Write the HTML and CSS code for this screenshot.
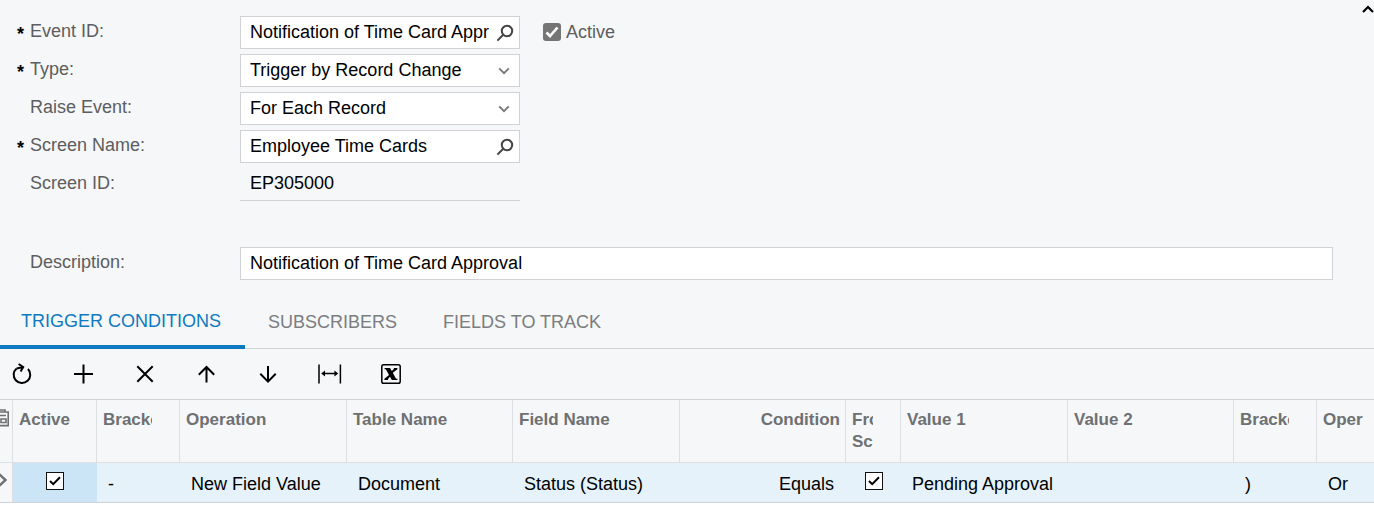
FILE: index.html
```html
<!DOCTYPE html>
<html lang="en">
<head>
<meta charset="utf-8">
<title>Business Events</title>
<link rel="stylesheet" href="styles.css">
</head>
<body>
<main class="panel">
  <form class="summary">
    <button type="button" class="collapse" aria-label="Collapse">
      <svg width="12" height="8" viewBox="0 0 12 8"><path d="M1 7 L6 2 L11 7" fill="none" stroke="#000" stroke-width="2.2"/></svg>
    </button>
    <div class="row">
      <label class="label required" for="event-id">Event ID:</label>
      <div class="field">
        <input class="text" id="event-id" type="text" value="Notification of Time Card Approval">
        <button type="button" class="lookup" aria-label="Find event">
          <svg width="18" height="18" viewBox="0 0 18 18"><circle cx="11" cy="7" r="5.2"/><path d="M7.2 10.8 L1.4 16.6"/></svg>
        </button>
      </div>
      <label class="active"><input class="check-solid" type="checkbox" checked>Active</label>
    </div>
    <div class="row">
      <label class="label required" for="type">Type:</label>
      <div class="field">
        <select class="text" id="type"><option>Trigger by Record Change</option></select>
        <svg class="chevron" width="12" height="8" viewBox="0 0 12 8"><path d="M1.2 1.4 L6 6.2 L10.8 1.4"/></svg>
      </div>
    </div>
    <div class="row">
      <label class="label" for="raise">Raise Event:</label>
      <div class="field">
        <select class="text" id="raise"><option>For Each Record</option></select>
        <svg class="chevron" width="12" height="8" viewBox="0 0 12 8"><path d="M1.2 1.4 L6 6.2 L10.8 1.4"/></svg>
      </div>
    </div>
    <div class="row">
      <label class="label required" for="screen-name">Screen Name:</label>
      <div class="field">
        <input class="text" id="screen-name" type="text" value="Employee Time Cards">
        <button type="button" class="lookup" aria-label="Find screen">
          <svg width="18" height="18" viewBox="0 0 18 18"><circle cx="11" cy="7" r="5.2"/><path d="M7.2 10.8 L1.4 16.6"/></svg>
        </button>
      </div>
    </div>
    <div class="row">
      <label class="label" for="screen-id">Screen ID:</label>
      <div class="field readonly">
        <input class="text" id="screen-id" type="text" value="EP305000" readonly>
      </div>
    </div>
    <div class="row wide">
      <label class="label" for="description">Description:</label>
      <div class="field">
        <input class="text" id="description" type="text" value="Notification of Time Card Approval">
      </div>
    </div>
  </form>

  <nav class="tabs">
    <a class="tab current" href="#conditions">TRIGGER CONDITIONS</a>
    <a class="tab" href="#subscribers">SUBSCRIBERS</a>
    <a class="tab" href="#fields">FIELDS TO TRACK</a>
  </nav>

  <div class="toolbar">
    <button type="button" class="tool" aria-label="Refresh">
      <svg width="24" height="24" viewBox="0 0 24 24"><path d="M6.6 6.4 A8.3 8.3 0 1 0 18 7"/><path d="M8.6 2 L13.2 5 L10.6 9.4 M13.2 5 L6.6 6.4"/></svg>
    </button>
    <button type="button" class="tool" aria-label="Add row">
      <svg width="24" height="24" viewBox="0 0 24 24"><path d="M2 12 H21 M11.5 2.5 V21.5"/></svg>
    </button>
    <button type="button" class="tool" aria-label="Delete row">
      <svg width="24" height="24" viewBox="0 0 24 24"><path d="M4.3 4.3 L19.7 19.7 M19.7 4.3 L4.3 19.7"/></svg>
    </button>
    <button type="button" class="tool" aria-label="Move up">
      <svg width="24" height="24" viewBox="0 0 24 24"><path d="M11.5 20.5 V5 M3.8 12.8 L11.5 5 L19.2 12.8"/></svg>
    </button>
    <button type="button" class="tool" aria-label="Move down">
      <svg width="24" height="24" viewBox="0 0 24 24"><path d="M12 4 V19.5 M4.3 11.8 L12 19.6 L19.7 11.8"/></svg>
    </button>
    <button type="button" class="tool" aria-label="Fit columns">
      <svg width="24" height="24" viewBox="0 0 24 24"><path class="thin" d="M1 2.5 V21.5 M22.4 2.5 V21.5 M5 11.5 H18.5"/><path class="solid" d="M3.2 11.5 L7 8.4 V14.6 Z M20.2 11.5 L16.4 8.4 V14.6 Z"/></svg>
    </button>
    <button type="button" class="tool" aria-label="Export to Excel">
      <svg width="24" height="24" viewBox="0 0 24 24"><rect class="thin" x="2.8" y="2.8" width="18.4" height="18.4" rx="1.8"/><path class="solid" d="M5.6 6 H11 L12.8 9 L14.8 7 V6 H18.4 V7.2 L13.8 10.8 L17 16.8 H18.4 V18 H12.8 L11 14.8 L9 17 V18 H5.4 V16.8 L10 13 L6.8 7.2 H5.6 Z"/></svg>
    </button>
  </div>

  <table class="grid">
    <colgroup>
      <col class="c-mark"><col class="c-active"><col class="c-small"><col class="c-a"><col class="c-b"><col class="c-a"><col class="c-b"><col class="c-from"><col class="c-a"><col class="c-b"><col class="c-small"><col>
    </colgroup>
    <thead>
      <tr>
        <th class="mark"><svg width="20" height="20" viewBox="0 0 20 20"><path d="M4 4 H18.2 V17.6 H4 M5 2 H15 V4 M4 7.5 H16 M4 11 H9 M4 14.5 H9 M11 11 H16 V14.5 H11 Z"/></svg></th>
        <th>Active</th>
        <th class="clipped"><div>Brackets</div></th>
        <th>Operation</th>
        <th>Table Name</th>
        <th>Field Name</th>
        <th class="right">Condition</th>
        <th class="clipped"><div>From Screen</div></th>
        <th>Value 1</th>
        <th>Value 2</th>
        <th class="clipped"><div>Brackets</div></th>
        <th>Oper</th>
      </tr>
    </thead>
    <tbody>
      <tr>
        <td class="mark"><svg width="12" height="16" viewBox="0 0 12 16"><path d="M2 2 L8.5 8 L2 14"/></svg></td>
        <td class="selected center"><input class="check" type="checkbox" checked aria-label="Active"></td>
        <td>-</td>
        <td>New Field Value</td>
        <td>Document</td>
        <td>Status (Status)</td>
        <td class="right">Equals</td>
        <td class="center"><input class="check" type="checkbox" checked aria-label="From Screen"></td>
        <td>Pending Approval</td>
        <td></td>
        <td>)</td>
        <td>Or</td>
      </tr>
    </tbody>
  </table>
</main>
</body>
</html>
```

FILE: styles.css
```css
* {
  box-sizing: border-box;
}

body {
  margin: 0;
  background: #fff;
  color: #000;
  font: 18px/22px "Liberation Sans", Arial, sans-serif;
  overflow-x: hidden;
}

button {
  display: flex;
  align-items: center;
  justify-content: center;
  padding: 0;
  border: 0;
  background: none;
}

.panel {
  background: #f5f7f9;
}

/* Summary form */
.summary {
  position: relative;
  display: flex;
  flex-direction: column;
  gap: 4px;
  padding: 16px 41px 14px 0;
}

.collapse {
  position: absolute;
  top: 5px;
  right: 0;
  width: 12px;
  overflow: hidden;
}

.row {
  display: grid;
  grid-template-columns: 240px 280px auto;
  justify-content: start;
}

.row.wide {
  grid-template-columns: 240px 1fr;
  justify-content: stretch;
  margin-top: 41px;
}

.label {
  position: relative;
  padding: 4px 0 0 30px;
  color: #5d5d5d;
}

.required::before {
  content: "*";
  position: absolute;
  left: 17px;
  top: 7px;
  color: #000;
  font-size: 18px;
  font-weight: bold;
}

.field {
  position: relative;
  display: flex;
  height: 33px;
  margin-bottom: 1px;
  border: 1px solid #d0d2d5;
  background: #fff;
}

.text {
  flex: 1;
  min-width: 0;
  margin: 0;
  padding: 0 0 1px 9px;
  border: 0;
  outline: 0;
  border-radius: 0;
  appearance: none;
  background: transparent;
  color: #000;
  font: inherit;
}

.readonly {
  border-width: 0 0 1px;
  background: none;
}

.readonly .text {
  padding: 0 0 2px 10px;
}

.lookup {
  width: 30px;
  padding-left: 2px;
}

.lookup svg {
  fill: none;
  stroke: #444;
  stroke-width: 2;
}

.chevron {
  position: absolute;
  right: 9px;
  top: 12px;
  pointer-events: none;
  fill: none;
  stroke: #777;
  stroke-width: 1.8;
}

.active {
  display: flex;
  align-items: center;
  gap: 5px;
  padding: 0 0 2px 23px;
  color: #5d5d5d;
}

.check-solid,
.check {
  flex: none;
  width: 18px;
  height: 18px;
  margin: 0;
  appearance: none;
}

.check-solid {
  border-radius: 3px;
  background: #757575 url("data:image/svg+xml,%3Csvg xmlns='http://www.w3.org/2000/svg' viewBox='0 0 18 18'%3E%3Cpath d='M3.5 9.5 L7 13 L14.5 4.5' fill='none' stroke='white' stroke-width='2.6'/%3E%3C/svg%3E");
}

/* Tabs */
.tabs {
  display: flex;
  height: 54px;
  border-bottom: 1px solid #d0d2d5;
}

.tab {
  height: 54px;
  padding: 16px 23px 0;
  color: #7b7d7f;
  text-decoration: none;
}

.tab.current {
  padding: 15px 24px 0 21px;
  border-bottom: 4px solid #0f7ac0;
  color: #0f7ac0;
}

/* Toolbar */
.toolbar {
  display: flex;
  justify-content: space-between;
  max-width: 403px;
  padding: 13px 0 13px 10px;
}

.tool svg {
  fill: none;
  stroke: #000;
  stroke-width: 2;
}

.tool .thin {
  stroke-width: 1.5;
}

.tool .solid {
  fill: #000;
  stroke: none;
}

/* Grid */
.grid {
  width: 100%;
  table-layout: fixed;
  border-collapse: separate;
  border-spacing: 0;
}

.c-mark { width: 13px; }
.c-active { width: 84px; }
.c-small { width: 83px; }
.c-a { width: 167px; }
.c-b { width: 166px; }
.c-from { width: 55px; }

th,
td {
  overflow: hidden;
  text-align: left;
  white-space: nowrap;
}

th {
  height: 64px;
  padding: 9px 6px 0;
  border: solid #dcdfe3;
  border-width: 1px 1px 1px 0;
  border-top-color: #d0d2d5;
  color: #6e7072;
  font-size: 17px;
  vertical-align: top;
}

td {
  height: 40px;
  padding: 2px 11px 0;
  border-bottom: 1px solid #cdd2da;
  background: #e5f2fa;
}

th:last-child {
  border-right: 0;
}

.clipped div {
  margin-right: 21px;
  overflow: hidden;
  white-space: normal;
}

.right {
  text-align: right;
}

th.right {
  padding-right: 5px;
}

td.right {
  padding-right: 12px;
}

td.selected {
  background: #cbe4f6;
}

td.center {
  padding: 0;
  text-align: center;
}

.mark {
  padding: 0;
  background: #f5f7f9;
}

td.mark {
  padding: 0;
  border-right: 1px solid #dcdfe3;
}

.mark svg {
  display: block;
  fill: none;
  stroke: #6e7072;
  stroke-width: 2;
}

th.mark {
  padding: 0;
}

th.mark svg {
  margin: 8px 0 0 -10px;
  stroke-width: 1.6;
}

td.mark svg {
  margin: -6px 0 0 -3px;
  stroke-width: 2.4;
}

.check {
  display: block;
  margin: -3px auto 0;
  border: 1.5px solid #111;
  background: #fff url("data:image/svg+xml,%3Csvg xmlns='http://www.w3.org/2000/svg' viewBox='0 0 16 16'%3E%3Cpath d='M3 8 L6.2 11.2 L13 4.2' fill='none' stroke='black' stroke-width='2'/%3E%3C/svg%3E");
}
```
